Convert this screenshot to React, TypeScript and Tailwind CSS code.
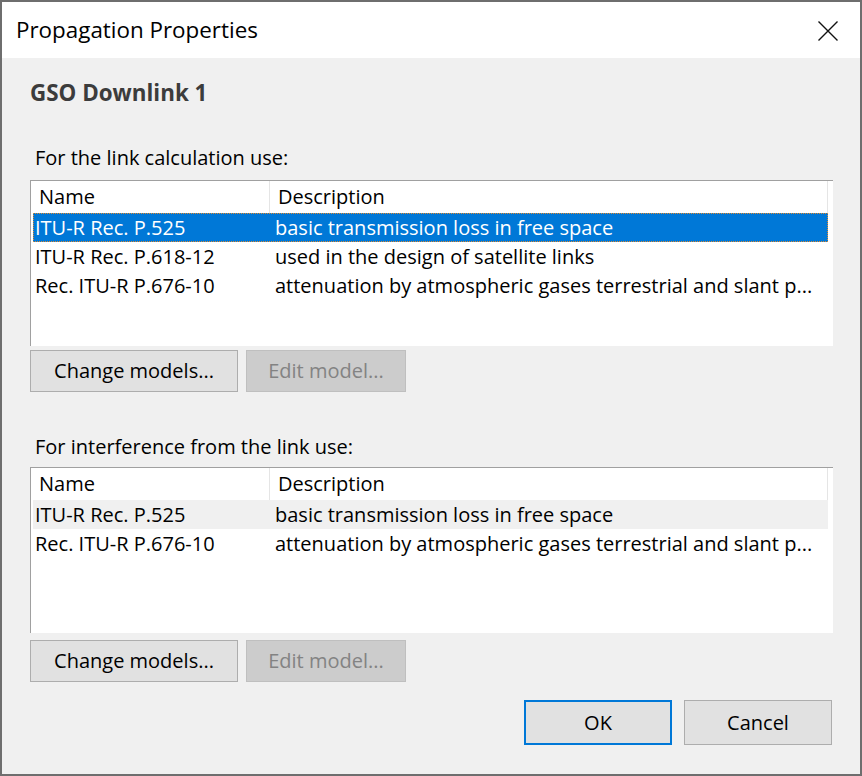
const FONT = "font-['Open_Sans',sans-serif]"

interface ModelRow {
  name: string
  description: string
  state?: 'selected' | 'hover'
}

const linkModels: ModelRow[] = [
  { name: 'ITU-R Rec. P.525', description: 'basic transmission loss in free space', state: 'selected' },
  { name: 'ITU-R Rec. P.618-12', description: 'used in the design of satellite links' },
  {
    name: 'Rec. ITU-R P.676-10',
    description: 'attenuation by atmospheric gases terrestrial and slant p...',
  },
]

const interferenceModels: ModelRow[] = [
  { name: 'ITU-R Rec. P.525', description: 'basic transmission loss in free space', state: 'hover' },
  {
    name: 'Rec. ITU-R P.676-10',
    description: 'attenuation by atmospheric gases terrestrial and slant p...',
  },
]

function ModelList({ rows }: { rows: ModelRow[] }) {
  return (
    <div className="h-[166px] w-[803px] border-t border-l border-[#a0a0a0] bg-white pl-[2px]">
      <div className="flex h-[32px] w-[795px] items-center text-[20px] text-black">
        <div className="flex h-full w-[237px] items-center border-r border-[#e5e5e5] pl-[6px]">Name</div>
        <div className="flex h-full flex-1 items-center border-r border-[#e5e5e5] pl-[8px]">Description</div>
      </div>
      {rows.map((row) => (
        <div
          key={row.name}
          className={
            row.state === 'selected'
              ? 'flex h-[29px] w-[795px] items-center border border-dotted border-[#e08a30] bg-[#0078d7] text-[20px] text-white'
              : row.state === 'hover'
                ? 'flex h-[29px] w-[795px] items-center border border-transparent bg-[#f0f0f0] text-[20px] text-black'
                : 'flex h-[29px] w-[795px] items-center border border-transparent text-[20px] text-black'
          }
        >
          <span className="w-[241px] shrink-0 whitespace-nowrap pl-[1px]">{row.name}</span>
          <span className="overflow-hidden whitespace-nowrap">{row.description}</span>
        </div>
      ))}
    </div>
  )
}

function ListButtons({ top }: { top: 'first' | 'second' }) {
  return (
    <div className={top === 'first' ? 'mt-[4px] flex gap-[8px]' : 'mt-[7px] flex gap-[8px]'}>
      <button
        type="button"
        className="flex h-[42px] w-[208px] items-center justify-center border border-[#adadad] bg-[#e1e1e1] text-[20px] text-black"
      >
        Change models...
      </button>
      <button
        type="button"
        disabled
        className="flex h-[42px] w-[160px] items-center justify-center border border-[#bfbfbf] bg-[#cccccc] text-[20px] text-[#838383]"
      >
        Edit model...
      </button>
    </div>
  )
}

export default function App() {
  return (
    <div className={`${FONT} flex h-[776px] w-[862px] flex-col border-2 border-[#6e6e6e] bg-[#f0f0f0]`}>
      <div className="flex h-[56px] shrink-0 items-center justify-between bg-white pl-[14px] pr-[21px]">
        <span className="text-[22.4px] text-black">Propagation Properties</span>
        <svg width="22" height="22" viewBox="0 0 22 22" className="mt-[2px]">
          <path d="M1.5 1.5 L20.5 20.5 M20.5 1.5 L1.5 20.5" stroke="#111" strokeWidth="1.4" fill="none" />
        </svg>
      </div>

      <div className="flex flex-col pl-[28px]">
        <div className="mt-[21px] h-[28px] text-[22.4px] font-bold leading-[28px] text-[#3c3c3c]">GSO Downlink 1</div>

        <div className="mt-[38px] h-[26px] pl-[5px] text-[20px] leading-[26px] text-black">
          For the link calculation use:
        </div>
        <div className="mt-[9px]">
          <ModelList rows={linkModels} />
        </div>
        <ListButtons top="first" />

        <div className="mt-[42px] h-[26px] pl-[5px] text-[20px] leading-[26px] text-black">
          For interference from the link use:
        </div>
        <div className="mt-[7px]">
          <ModelList rows={interferenceModels} />
        </div>
        <ListButtons top="second" />

        <div className="mt-[18px] flex justify-end gap-[12px] pr-[28px]">
          <button
            type="button"
            className="flex h-[45px] w-[148px] items-center justify-center border-2 border-[#0078d7] bg-[#e1e1e1] text-[20px] text-black"
          >
            OK
          </button>
          <button
            type="button"
            className="flex h-[45px] w-[148px] items-center justify-center border border-[#adadad] bg-[#e1e1e1] text-[20px] text-black"
          >
            Cancel
          </button>
        </div>
      </div>
    </div>
  )
}
